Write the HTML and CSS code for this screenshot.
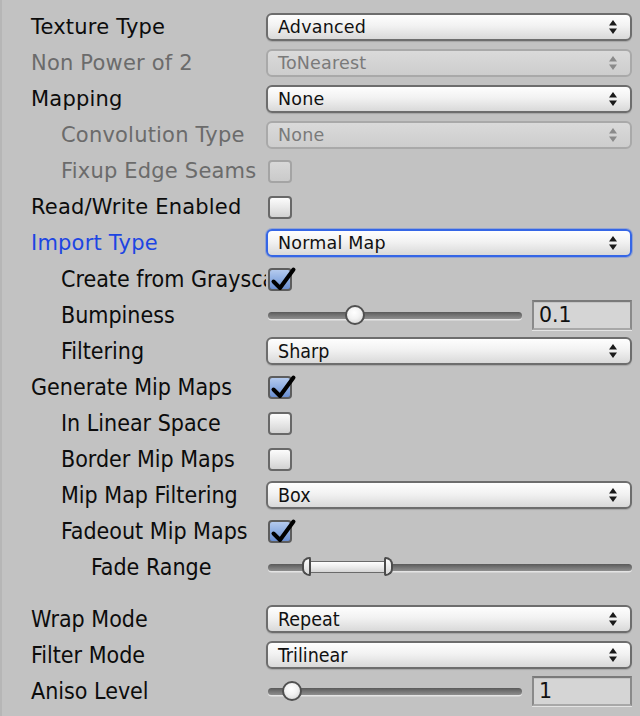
FILE: index.html
```html
<!DOCTYPE html>
<html>
<head>
<meta charset="utf-8">
<link rel="stylesheet" href="styles.css">
</head>
<body>
<div class="inspector">
  <div class="row wide">
    <div class="label">Texture Type</div>
    <div class="popup"><span>Advanced</span><svg class="arrows" width="8" height="14" viewBox="0 0 8 14"><path d="M4 0 L8 5.5 L0 5.5 Z M0 8.5 L8 8.5 L4 14 Z"/></svg></div>
  </div>
  <div class="row wide disabled">
    <div class="label">Non Power of 2</div>
    <div class="popup"><span>ToNearest</span><svg class="arrows" width="8" height="14" viewBox="0 0 8 14"><path d="M4 0 L8 5.5 L0 5.5 Z M0 8.5 L8 8.5 L4 14 Z"/></svg></div>
  </div>
  <div class="row wide">
    <div class="label">Mapping</div>
    <div class="popup"><span>None</span><svg class="arrows" width="8" height="14" viewBox="0 0 8 14"><path d="M4 0 L8 5.5 L0 5.5 Z M0 8.5 L8 8.5 L4 14 Z"/></svg></div>
  </div>
  <div class="row wide disabled in1">
    <div class="label">Convolution Type</div>
    <div class="popup"><span>None</span><svg class="arrows" width="8" height="14" viewBox="0 0 8 14"><path d="M4 0 L8 5.5 L0 5.5 Z M0 8.5 L8 8.5 L4 14 Z"/></svg></div>
  </div>
  <div class="row wide disabled in1">
    <div class="label">Fixup Edge Seams</div>
    <div><div class="check"></div></div>
  </div>
  <div class="row wide">
    <div class="label">Read/Write Enabled</div>
    <div><div class="check"></div></div>
  </div>
  <div class="row wide">
    <div class="label blue">Import Type</div>
    <div class="popup focus"><span>Normal Map</span><svg class="arrows" width="8" height="14" viewBox="0 0 8 14"><path d="M4 0 L8 5.5 L0 5.5 Z M0 8.5 L8 8.5 L4 14 Z"/></svg></div>
  </div>

  <div class="row narrow in1">
    <div class="label">Create from Grayscale</div>
    <div><div class="check on"><svg class="tick" width="30" height="30" viewBox="0 0 30 30"><path d="M4.5 14.5 L11 21 L24.5 2.5"/></svg></div></div>
  </div>
  <div class="row narrow in1">
    <div class="label">Bumpiness</div>
    <div class="slider-field">
      <div class="track"><div class="thumb" style="left: 34.4%"></div></div>
      <div class="number">0.1</div>
    </div>
  </div>
  <div class="row narrow in1">
    <div class="label">Filtering</div>
    <div class="popup"><span>Sharp</span><svg class="arrows" width="8" height="14" viewBox="0 0 8 14"><path d="M4 0 L8 5.5 L0 5.5 Z M0 8.5 L8 8.5 L4 14 Z"/></svg></div>
  </div>
  <div class="row narrow">
    <div class="label">Generate Mip Maps</div>
    <div><div class="check on"><svg class="tick" width="30" height="30" viewBox="0 0 30 30"><path d="M4.5 14.5 L11 21 L24.5 2.5"/></svg></div></div>
  </div>
  <div class="row narrow in1">
    <div class="label">In Linear Space</div>
    <div><div class="check"></div></div>
  </div>
  <div class="row narrow in1">
    <div class="label">Border Mip Maps</div>
    <div><div class="check"></div></div>
  </div>
  <div class="row narrow in1">
    <div class="label">Mip Map Filtering</div>
    <div class="popup"><span>Box</span><svg class="arrows" width="8" height="14" viewBox="0 0 8 14"><path d="M4 0 L8 5.5 L0 5.5 Z M0 8.5 L8 8.5 L4 14 Z"/></svg></div>
  </div>
  <div class="row narrow in1">
    <div class="label">Fadeout Mip Maps</div>
    <div><div class="check on"><svg class="tick" width="30" height="30" viewBox="0 0 30 30"><path d="M4.5 14.5 L11 21 L24.5 2.5"/></svg></div></div>
  </div>
  <div class="row narrow in2">
    <div class="label">Fade Range</div>
    <div class="track full"><div class="range" style="left: 10.1%; width: 23.4%"></div></div>
  </div>

  <div class="spacer"></div>

  <div class="row narrow">
    <div class="label">Wrap Mode</div>
    <div class="popup"><span>Repeat</span><svg class="arrows" width="8" height="14" viewBox="0 0 8 14"><path d="M4 0 L8 5.5 L0 5.5 Z M0 8.5 L8 8.5 L4 14 Z"/></svg></div>
  </div>
  <div class="row narrow">
    <div class="label">Filter Mode</div>
    <div class="popup"><span>Trilinear</span><svg class="arrows" width="8" height="14" viewBox="0 0 8 14"><path d="M4 0 L8 5.5 L0 5.5 Z M0 8.5 L8 8.5 L4 14 Z"/></svg></div>
  </div>
  <div class="row narrow">
    <div class="label">Aniso Level</div>
    <div class="slider-field">
      <div class="track"><div class="thumb" style="left: 9.4%"></div></div>
      <div class="number">1</div>
    </div>
  </div>
</div>
</body>
</html>
```

FILE: styles.css
```css
html, body {
  margin: 0;
  padding: 0;
  background: #c2c2c2;
}

.inspector {
  box-sizing: border-box;
  width: 640px;
  height: 716px;
  padding: 9px 8px 7px 0;
  border-left: 2px solid #b6b6b6;
  color: #0c0c0c;
  font-family: "DejaVu Sans", sans-serif;
}

.row {
  display: grid;
  grid-template-columns: 264px 1fr;
  align-items: center;
  height: 36px;
}

.wide {
  font-family: "DejaVu Sans", sans-serif;
  font-size: 21px;
  letter-spacing: 0.2px;
}

.narrow {
  font-family: "DejaVu Sans Condensed", "DejaVu Sans", sans-serif;
  font-stretch: condensed;
  font-size: 23px;
}

.label {
  padding-left: 29px;
  white-space: nowrap;
  overflow: hidden;
  line-height: 36px;
}

.in1 .label { padding-left: 59px; }
.in2 .label { padding-left: 89px; }

.disabled .label { color: #6b6b6b; }
.label.blue { color: #1d45e2; }

.spacer { height: 16px; }

/* popup */
.popup {
  box-sizing: border-box;
  height: 28px;
  display: flex;
  align-items: center;
  justify-content: space-between;
  padding: 0 13px 0 10px;
  border: 2px solid #6d6d6d;
  border-radius: 6px;
  background: linear-gradient(#fefefe, #f2f2f2 45%, #d9d9d9);
  box-shadow: 0 1px 1px rgba(0, 0, 0, 0.15);
  font-size: 17.5px;
  letter-spacing: 0.2px;
  color: #111;
}

.narrow .popup { font-size: 19.5px; letter-spacing: 0; }

.popup .arrows { fill: #1a1a1a; }

.popup.focus {
  border-color: #3566e6;
  box-shadow: 0 0 0 1px rgba(60, 110, 240, 0.35);
}

.disabled .popup {
  border-color: #a9a9a9;
  background: linear-gradient(#dadada, #cdcdcd);
  color: #7a7a7a;
  box-shadow: none;
}

.disabled .popup .arrows { fill: #8a8a8a; }

/* checkbox */
.check {
  position: relative;
  box-sizing: border-box;
  width: 24px;
  height: 23px;
  margin-left: 2px;
  border: 2px solid #686868;
  border-radius: 4px;
  background: linear-gradient(#fcfcfc, #e8e8e8 50%, #d2d2d2);
}

.disabled .check {
  border-color: #a4a4a4;
  background: linear-gradient(#d8d8d8, #cacaca);
}

.check.on {
  border-color: #5d5d5d;
  background: linear-gradient(#b4caee, #8eaee2 50%, #6a8ed0);
}

.check .tick {
  position: absolute;
  left: -1px;
  top: -3px;
  overflow: visible;
}

.check .tick path {
  fill: none;
  stroke: #000;
  stroke-width: 4;
  stroke-linecap: round;
  stroke-linejoin: round;
}

/* slider */
.slider-field {
  display: flex;
  align-items: center;
  gap: 10px;
  padding-left: 2px;
}

.track {
  position: relative;
  flex: 1;
  height: 7px;
  border-radius: 4px;
  background: linear-gradient(#5a5a5a, #7a7a7a 60%, #8e8e8e);
  box-shadow: 0 1.5px 0 #e4e4e4;
}

.track.full { margin-left: 2px; }

.thumb {
  position: absolute;
  top: 50%;
  width: 20px;
  height: 20px;
  box-sizing: border-box;
  margin-left: -10px;
  margin-top: -10px;
  border: 2px solid #505050;
  border-radius: 50%;
  background: radial-gradient(circle at 45% 35%, #ffffff, #f2f2f2 45%, #cfcfcf);
}

.number {
  box-sizing: border-box;
  width: 100px;
  height: 30px;
  padding-left: 5px;
  border: 2px solid #8a8a8a;
  border-top-color: #7a7a7a;
  border-bottom-color: #a8a8a8;
  background: #d5d5d5;
  box-shadow: inset 0 1px 0 #c4c4c4, 0 1px 0 #e4e4e4;
  font-family: "DejaVu Sans", sans-serif;
  font-stretch: normal;
  font-size: 20.5px;
  line-height: 26px;
  color: #111;
}

/* min-max range */
.range {
  position: absolute;
  top: 50%;
  height: 12px;
  margin-top: -6px;
  box-sizing: border-box;
  border-top: 1.5px solid #6a6a6a;
  border-bottom: 1.5px solid #6a6a6a;
  background: linear-gradient(#ffffff, #ececec 50%, #d6d6d6);
}

.range::before,
.range::after {
  content: "";
  position: absolute;
  top: -5px;
  width: 9px;
  height: 19px;
  box-sizing: border-box;
  border: 2px solid #4c4c4c;
  background: linear-gradient(#ffffff, #d8d8d8);
}

.range::before {
  left: -3px;
  border-radius: 9px 2px 2px 9px;
}

.range::after {
  right: -3px;
  border-radius: 2px 9px 9px 2px;
}
```
